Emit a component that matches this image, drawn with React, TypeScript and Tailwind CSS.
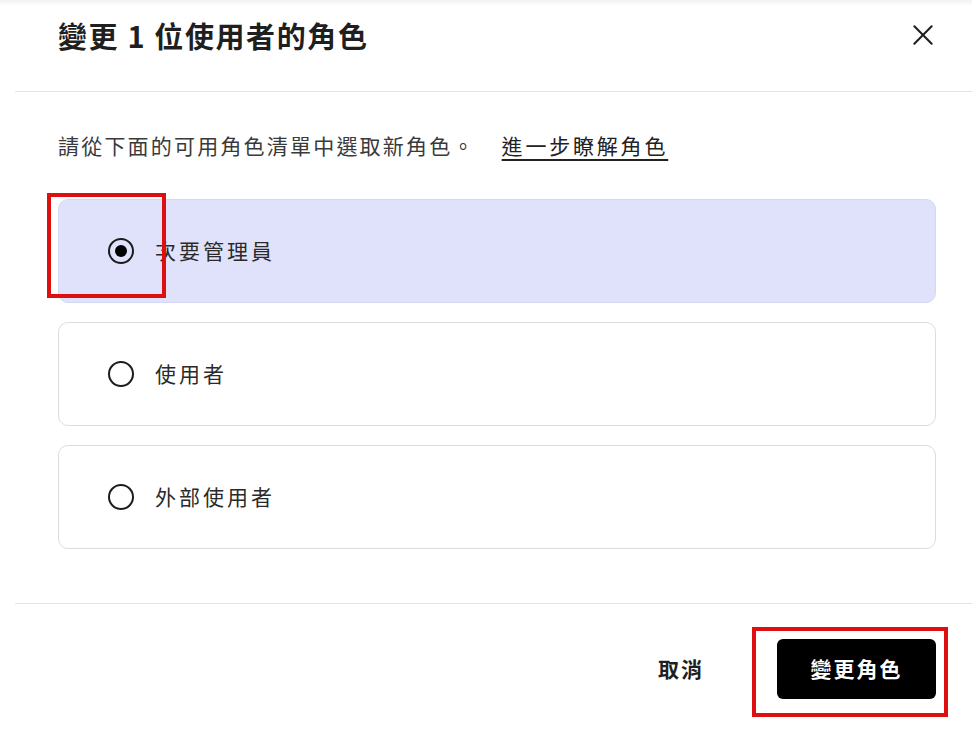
import { useState } from "react";

type Role = {
  id: string;
  label: string;
};

const ROLES: Role[] = [
  { id: "secondary-admin", label: "次要管理員" },
  { id: "user", label: "使用者" },
  { id: "external", label: "外部使用者" },
];

const FONT = "font-['Noto_Sans_CJK_TC','Noto_Sans',sans-serif]";

function Radio({ checked }: { checked: boolean }) {
  return (
    <span className="flex h-[26px] w-[26px] shrink-0 items-center justify-center rounded-full border-2 border-[#1c1c1c]">
      {checked && <span className="h-[12px] w-[12px] rounded-full bg-black" />}
    </span>
  );
}

export default function App() {
  const [selected, setSelected] = useState("secondary-admin");

  return (
    <main
      className={`relative h-[735px] w-[972px] overflow-hidden bg-white text-[#222] ${FONT}`}
    >
      {/* faint shadow at the top edge */}
      <div className="h-[6px] bg-gradient-to-b from-[#f2f2f2] to-white" />

      {/* Header */}
      <div className="flex h-[85px] items-start justify-between pl-[58px] pr-[34px] pt-[10px]">
        <h1 className="text-[29px] font-bold leading-[38px] tracking-[1.6px] text-[#1f1f1f]">
          變更 1 位使用者的角色
        </h1>
        <button className="mt-[4px] flex h-[30px] w-[30px] items-center justify-center">
          <svg width="26" height="26" viewBox="0 0 24 24" fill="none">
            <path
              d="M4 4 L20 20 M20 4 L4 20"
              stroke="#1f1f1f"
              strokeWidth="1.9"
              strokeLinecap="round"
            />
          </svg>
        </button>
      </div>
      <div className="ml-[15px] h-px bg-[#e4e4e4]" />

      {/* Body */}
      <div className="pl-[58px] pr-[36px] pt-[38px]">
        <p className="text-[21px] leading-[30px] tracking-[2.2px] text-[#3a3a3a]">
          請從下面的可用角色清單中選取新角色。
          <a className="ml-[26px] tracking-[2.8px] text-[#222] underline decoration-[1.5px] underline-offset-[5px]">
            進一步瞭解角色
          </a>
        </p>

        <div className="mt-[39px] flex flex-col gap-[19px]">
          {ROLES.map((r) => {
            const active = r.id === selected;
            return (
              <label
                key={r.id}
                onClick={() => setSelected(r.id)}
                className={`flex h-[104px] cursor-pointer items-center gap-[21px] rounded-[10px] border pl-[49px] ${
                  active
                    ? "border-[#d5d8f2] bg-[#e0e2fc]"
                    : "border-[#dcdcdc] bg-white"
                }`}
              >
                <Radio checked={active} />
                <span className="text-[21px] tracking-[3px] text-[#2a2a2a]">
                  {r.label}
                </span>
              </label>
            );
          })}
        </div>
      </div>

      {/* Footer */}
      <div className="mt-[54px] ml-[15px] h-px bg-[#e4e4e4]" />
      <div className="flex items-center justify-end gap-[73px] pr-[36px] pt-[35px]">
        <button className="text-[21px] font-bold tracking-[2px] text-[#1f1f1f]">
          取消
        </button>
        <button className="flex h-[60px] w-[159px] items-center justify-center rounded-[6px] bg-black text-[21px] font-bold tracking-[2px] text-white">
          變更角色
        </button>
      </div>

      {/* annotation marks drawn over the screenshot */}
      <div className="pointer-events-none absolute left-[47px] top-[193px] h-[105px] w-[119px] border-[4px] border-[#dd0f0f]" />
      <div className="pointer-events-none absolute left-[752px] top-[627px] h-[90px] w-[196px] border-[4px] border-[#dd0f0f]" />
    </main>
  );
}
